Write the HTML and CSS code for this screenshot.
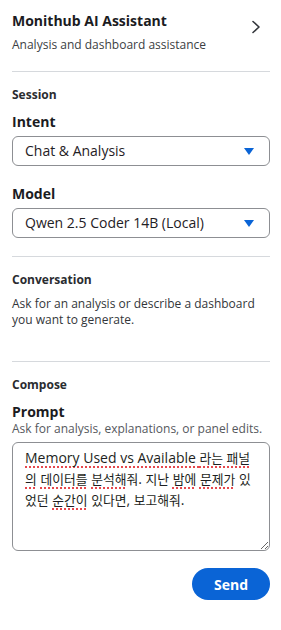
FILE: index.html
```html
<!DOCTYPE html>
<html lang="ko">
<head>
<meta charset="utf-8">
<title>Monithub AI Assistant</title>
<link rel="stylesheet" href="styles.css">
</head>
<body>
<aside class="panel">
  <header class="header">
    <div class="header-text">
      <h1 class="title">Monithub AI Assistant</h1>
      <p class="subtitle">Analysis and dashboard assistance</p>
    </div>
    <svg class="chevron" width="12" height="14" viewBox="0 0 12 14" aria-hidden="true">
      <polyline points="4,1.5 10,7 4,12.5" fill="none" stroke="#33363b" stroke-width="1.6" stroke-linecap="round" stroke-linejoin="round"/>
    </svg>
  </header>

  <div class="divider"></div>

  <section class="section">
    <h2 class="section-label">Session</h2>
    <div class="field field-first">
      <label class="field-label">Intent</label>
      <div class="select">
        <span class="select-value">Chat &amp; Analysis</span>
        <svg class="caret" width="10" height="7" viewBox="0 0 10 7" aria-hidden="true"><polygon points="0,0 10,0 5,7" fill="#0a64d6"/></svg>
      </div>
    </div>
    <div class="field">
      <label class="field-label">Model</label>
      <div class="select">
        <span class="select-value">Qwen 2.5 Coder 14B (Local)</span>
        <svg class="caret" width="10" height="7" viewBox="0 0 10 7" aria-hidden="true"><polygon points="0,0 10,0 5,7" fill="#0a64d6"/></svg>
      </div>
    </div>
  </section>

  <div class="divider"></div>

  <section class="section">
    <h2 class="section-label">Conversation</h2>
    <p class="empty-text">Ask for an analysis or describe a dashboard you want to generate.</p>
  </section>

  <div class="divider"></div>

  <section class="section">
    <h2 class="section-label">Compose</h2>
    <label class="field-label prompt-label">Prompt</label>
    <p class="hint">Ask for analysis, explanations, or panel edits.</p>
    <div class="prompt" contenteditable="true" role="textbox" aria-multiline="true"><span class="sp">Memory Used vs Available <span class="ko">라는 패널</span></span><span class="sp ko">의</span> <span class="sp ko">데이터를</span> <span class="ko"><span class="sp">분석해</span>줘</span>. <span class="ko">지난</span> <span class="sp ko">밤에</span> <span class="sp ko">문제가</span> <span class="ko">있었던</span> <span class="sp ko">순간이</span> <span class="ko">있다면</span>, <span class="ko">보고해줘</span>.</div>
    <div class="actions">
      <button class="send" type="button">Send</button>
    </div>
  </section>
</aside>
</body>
</html>
```

FILE: styles.css
```css
* {
  box-sizing: border-box;
}

html, body {
  margin: 0;
  padding: 0;
  background: #ffffff;
}

body {
  font-family: "Open Sans", "Noto Sans CJK KR", sans-serif;
  color: #1d1f22;
}

.panel {
  padding: 11px 11px 0 12px;
}

.header {
  display: flex;
  justify-content: space-between;
  align-items: flex-start;
}

.title {
  margin: 0;
  font-size: 14px;
  line-height: 20px;
  font-weight: 700;
  color: #1b1c1f;
}

.subtitle {
  margin: 6px 0 0;
  font-size: 12px;
  line-height: 16px;
  color: #3b3e43;
}

.chevron {
  margin-top: 9px;
  margin-right: 9px;
  flex: none;
}

.divider {
  height: 1px;
  margin-top: 18px;
  background: #d6d9dd;
}

.section-label {
  margin: 15px 0 0;
  font-size: 12px;
  line-height: 16px;
  font-weight: 700;
  color: #2a2c30;
}

.field {
  margin-top: 18px;
}

.field-first {
  margin-top: 9px;
}

.field-label {
  display: block;
  font-size: 14px;
  line-height: 20px;
  font-weight: 700;
  color: #1b1c1f;
}

.select {
  margin-top: 4px;
  height: 30px;
  border: 1px solid #8d8f93;
  border-radius: 6px;
  padding: 0 15px 0 12px;
  display: flex;
  align-items: center;
  justify-content: space-between;
}

.select-value {
  font-size: 14px;
  line-height: 20px;
  color: #1f2125;
}

.caret {
  flex: none;
}

.empty-text {
  margin: 8px 0 0;
  min-height: 47px;
  font-size: 12px;
  line-height: 16px;
  color: #33363a;
}

.prompt-label {
  margin-top: 10px;
  line-height: 18px;
}

.hint {
  margin: 0;
  font-size: 12px;
  line-height: 16px;
  color: #55585d;
}

.prompt {
  margin-top: 5px;
  height: 109px;
  border: 1px solid #8d8f93;
  border-radius: 6px;
  padding: 4px 12px;
  font-size: 14px;
  line-height: 21px;
  color: #1d1f22;
  resize: vertical;
  overflow: auto;
  outline: none;
}

.ko {
  font-size: 12.8px;
  line-height: 16px;
}

.sp {
  text-decoration: underline dotted #e5484d;
  text-decoration-thickness: 1.5px;
  text-underline-offset: 3px;
}

.actions {
  display: flex;
  justify-content: flex-end;
  margin-top: 17px;
}

.send {
  width: 78px;
  height: 32px;
  border: none;
  border-radius: 16px;
  background: #0a64d6;
  color: #ffffff;
  font-family: "Open Sans", sans-serif;
  font-size: 14px;
  font-weight: 700;
  cursor: pointer;
}
```
